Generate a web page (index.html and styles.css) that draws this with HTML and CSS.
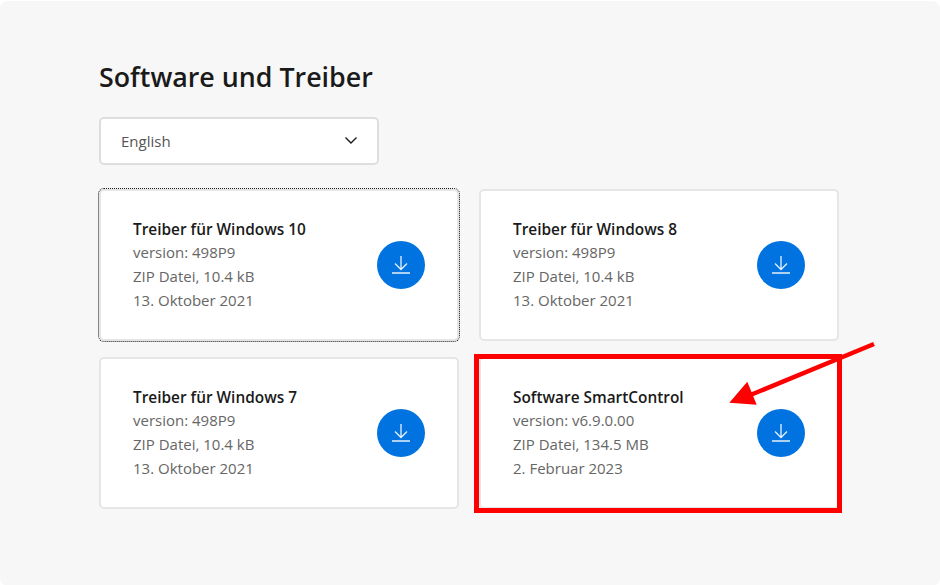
FILE: index.html
```html
<!DOCTYPE html>
<html lang="de">
<head>
    <meta charset="UTF-8">
    <meta name="viewport" content="width=device-width, initial-scale=1.0">
    <title>Software und Treiber</title>
    <link rel="stylesheet" href="styles.css">
</head>
<body>
    <main class="downloads">
        <h1>Software und Treiber</h1>

        <!-- Language select -->
        <div class="lang-select">
            <span>English</span>
            <svg class="chevron" width="14" height="14" viewBox="0 0 14 14"><path d="M1.500 3.500 7 9 12.500 3.500" fill="none" stroke="#1a1a1a" stroke-width="1.4"/></svg>
        </div>

        <!-- Download cards -->
        <div class="card-grid">
            <div class="card card-focus">
                <div class="card-text">
                    <h2>Treiber für Windows 10</h2>
                    <p>version: 498P9</p>
                    <p>ZIP Datei, 10.4 kB</p>
                    <p>13. Oktober 2021</p>
                </div>
                <a class="dl-btn" href="#"><svg width="18" height="18" viewBox="0 0 18 18"><path d="M9 0V13M3 7.500 9 13.500 15 7.500M0 17H18" fill="none" stroke="#e6f1fc" stroke-width="1.3"/></svg></a>
            </div>
            <div class="card">
                <div class="card-text">
                    <h2>Treiber für Windows 8</h2>
                    <p>version: 498P9</p>
                    <p>ZIP Datei, 10.4 kB</p>
                    <p>13. Oktober 2021</p>
                </div>
                <a class="dl-btn" href="#"><svg width="18" height="18" viewBox="0 0 18 18"><path d="M9 0V13M3 7.500 9 13.500 15 7.500M0 17H18" fill="none" stroke="#e6f1fc" stroke-width="1.3"/></svg></a>
            </div>
            <div class="card">
                <div class="card-text">
                    <h2>Treiber für Windows 7</h2>
                    <p>version: 498P9</p>
                    <p>ZIP Datei, 10.4 kB</p>
                    <p>13. Oktober 2021</p>
                </div>
                <a class="dl-btn" href="#"><svg width="18" height="18" viewBox="0 0 18 18"><path d="M9 0V13M3 7.500 9 13.500 15 7.500M0 17H18" fill="none" stroke="#e6f1fc" stroke-width="1.3"/></svg></a>
            </div>
            <div class="card">
                <div class="card-text">
                    <h2>Software SmartControl</h2>
                    <p>version: v6.9.0.00</p>
                    <p>ZIP Datei, 134.5 MB</p>
                    <p>2. Februar 2023</p>
                </div>
                <a class="dl-btn" href="#"><svg width="18" height="18" viewBox="0 0 18 18"><path d="M9 0V13M3 7.500 9 13.500 15 7.500M0 17H18" fill="none" stroke="#e6f1fc" stroke-width="1.3"/></svg></a>
            </div>
        </div>
    </main>

    <!-- Red annotation drawn over the page -->
    <svg class="annotation" width="940" height="585" viewBox="0 0 940 585">
        <rect x="476.500" y="356.500" width="363" height="154" fill="none" stroke="#fe0000" stroke-width="5"/>
        <path d="M874 344 748 396" fill="none" stroke="#fe0000" stroke-width="4.500"/>
        <path d="M729.300 402.700 747.300 381.700 756.700 404.700Z" fill="#fe0000"/>
    </svg>
</body>
</html>
```

FILE: styles.css
```css
/* Global styles */
body {
    font-family: 'Open Sans', 'Noto Sans', sans-serif;
    margin: 0;
    padding: 0;
    background-color: #fff;
    color: #1a1a1a;
}

.downloads {
    box-sizing: border-box;
    width: 940px;
    height: 585px;
    margin-top: 1px;
    padding: 59px 101px 0 99px;
    background-color: #f7f7f7;
    border-radius: 8px;
}

h1 {
    margin: 0 0 23px;
    font-size: 26.800px;
    line-height: 34px;
    font-weight: 600;
}

/* Language select */
.lang-select {
    box-sizing: border-box;
    display: flex;
    align-items: center;
    justify-content: space-between;
    width: 280px;
    height: 48px;
    padding: 0 19px 0 20px;
    background-color: #fff;
    border: 2px solid #dedede;
    border-radius: 5px;
    font-size: 15px;
    color: #555;
}

/* Cards */
.card-grid {
    display: grid;
    grid-template-columns: 360px 360px;
    gap: 16px 20px;
    margin-top: 24px;
}

.card {
    box-sizing: border-box;
    display: flex;
    align-items: center;
    justify-content: space-between;
    height: 152px;
    padding: 0 32px;
    background-color: #fff;
    border: 2px solid #e6e6e6;
    border-radius: 5px;
}

.card-focus {
    outline: 1px dotted #111;
}

.card-text {
    padding-bottom: 1px;
}

.card-text h2 {
    margin: 0;
    padding-top: 3px;
    font-size: 15.400px;
    line-height: 20px;
    font-weight: 600;
}

.card-text p {
    margin: 0;
    font-size: 15px;
    line-height: 24px;
    color: #666;
}

.dl-btn {
    display: flex;
    align-items: center;
    justify-content: center;
    width: 48px;
    height: 48px;
    background-color: #0073e0;
    border-radius: 50%;
}

.annotation {
    position: absolute;
    top: 0;
    left: 0;
}
```
